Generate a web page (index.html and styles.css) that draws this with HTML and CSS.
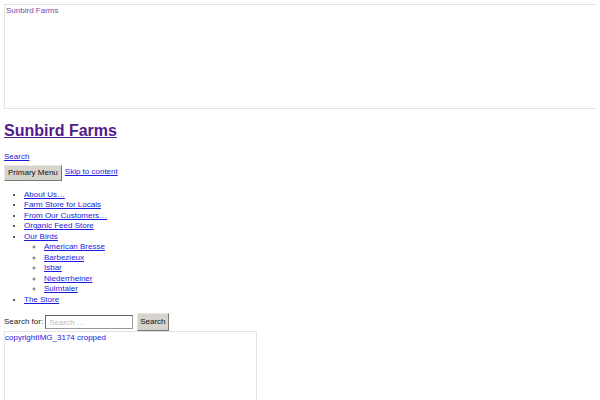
FILE: index.html
```html
<!DOCTYPE html>
<html>
<head>
<meta charset="utf-8">
<link rel="stylesheet" href="styles.css">
</head>
<body>
<div class="banner"><a class="banner-alt" href="#">Sunbird Farms</a></div>
<h1 class="site-title"><a href="#">Sunbird Farms</a></h1>
<div class="line"><a class="link" href="#">Search</a></div>
<div class="nav-row"><button class="btn">Primary Menu</button> <a class="link" href="#">Skip to content</a></div>
<ul class="menu">
  <li><a class="link" href="#">About Us…</a></li>
  <li><a class="link" href="#">Farm Store for Locals</a></li>
  <li><a class="link" href="#">From Our Customers…</a></li>
  <li><a class="link" href="#">Organic Feed Store</a></li>
  <li><a class="link" href="#">Our Birds</a>
    <ul class="sub">
      <li><a class="link" href="#">American Bresse</a></li>
      <li><a class="link" href="#">Barbezieux</a></li>
      <li><a class="link" href="#">Isbar</a></li>
      <li><a class="link" href="#">Niederrheiner</a></li>
      <li><a class="link" href="#">Sulmtaler</a></li>
    </ul>
  </li>
  <li><a class="link" href="#">The Store</a></li>
</ul>
<form class="search">
  <label class="label">Search for:</label>
  <input class="field" type="text" placeholder="Search …">
  <button class="btn btn-search" type="button">Search</button>
</form>
<div class="photo"><span class="photo-alt">copyrightIMG_3174 cropped</span></div>
</body>
</html>
```
FILE: styles.css
```css
html {
  overflow: hidden;
}
body {
  margin: 4px;
  font-family: "Liberation Sans", Arial, sans-serif;
  font-size: 8px;
  line-height: 10.5px;
  color: #222;
  background: #fff;
}
.banner {
  width: calc(100% + 40px);
  height: 102px;
  border: 1px solid #e2e2e2;
  padding: 1px 0 0 1px;
}
.banner-alt {
  color: #7a4aa8;
  text-decoration: none;
}
.site-title {
  font-size: 16px;
  line-height: 18px;
  margin: 13px 0 12px;
}
.site-title a {
  color: #551a8b;
}
.link {
  color: #1a1add;
}
.line {
  line-height: 10.5px;
}
.nav-row {
  display: flex;
  align-items: center;
  gap: 3px;
  margin-top: 2px;
}
.btn {
  font-family: "Liberation Sans", Arial, sans-serif;
  font-size: 8px;
  line-height: 10px;
  color: #111;
  background: #d6d3cc;
  border: 1px solid #a8a5a0;
  border-right-color: #777;
  border-bottom-color: #777;
  border-top-color: #e8e6e2;
  border-left-color: #e8e6e2;
  padding: 2px 3px;
  margin: 0;
}
.menu {
  margin: 9px 0 8px;
  padding-left: 20px;
  list-style: disc;
}
.sub {
  margin: 0;
  padding-left: 20px;
  list-style: circle;
}
.menu li::marker {
  font-size: 7px;
}
.menu .sub li::marker {
  font-size: 8px;
  color: #666;
}
.search {
  display: flex;
  align-items: center;
  margin: 0;
}
.label {
  color: #222;
}
.field {
  font-family: "Liberation Sans", Arial, sans-serif;
  font-size: 8px;
  width: 80px;
  height: 10px;
  padding: 1px 3px;
  margin: 0 4px 0 2px;
  border: 1px solid #999;
  border-top-color: #666;
  border-left-color: #666;
}
.field::placeholder {
  color: #bbb;
}
.btn-search {
  padding: 3px 2px;
}
.photo {
  width: 251px;
  height: 120px;
  border: 1px solid #e2e2e2;
  padding: 1px 0 0 0;
  margin-top: 0;
}
.photo-alt {
  color: #1a1add;
}
```
